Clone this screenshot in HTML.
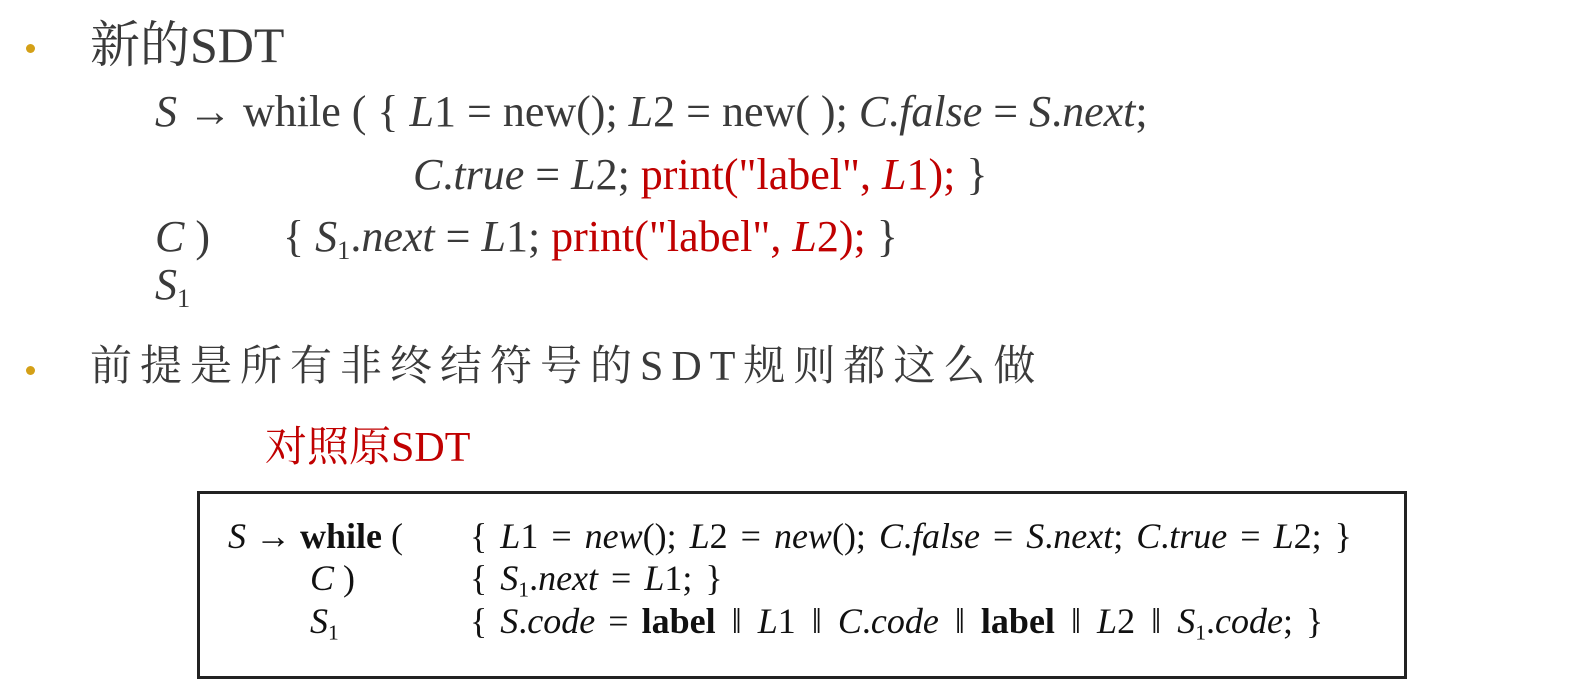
<!DOCTYPE html>
<html><head><meta charset="utf-8"><style>
body{margin:0;width:1577px;height:700px;background:#fff;position:relative;overflow:hidden;font-family:"Liberation Serif","Noto Serif CJK SC",serif;color:#3a3a3a}
.a{position:absolute;white-space:nowrap;line-height:1}
.f{font-size:44px}
i{font-style:italic}
.r{color:#c00000}
.dot{position:absolute;width:9px;height:9px;border-radius:50%;background:#d4a017}
.box{position:absolute;left:197px;top:491px;width:1204px;height:182px;border:3px solid #222}
.b{font-size:36px;color:#111}
.w{word-spacing:4px}
.p{margin:0 3px}
sub{font-size:0.6em;vertical-align:-0.3em}
</style></head><body>
<div class="dot" style="left:26px;top:44px"></div>
<div class="a" style="left:90px;top:20px;font-size:50px">新的SDT</div>
<div class="a f" style="left:155px;top:90px"><i>S</i> <b>&#8594;</b> while ( { <i>L</i>1 = new(); <i>L</i>2 = new( ); <i>C</i>.<i>false</i> = <i>S</i>.<i>next</i>;</div>
<div class="a f" style="left:413px;top:153px"><i>C</i>.<i>true</i> = <i>L</i>2; <span class="r">print("label", <i>L</i>1);</span> }</div>
<div class="a f" style="left:155px;top:215px"><i>C</i> )</div>
<div class="a f" style="left:283px;top:215px">{ <i>S</i><sub>1</sub>.<i>next</i> = <i>L</i>1; <span class="r">print("label", <i>L</i>2);</span> }</div>
<div class="a f" style="left:155px;top:263px"><i>S</i><sub>1</sub></div>
<div class="dot" style="left:26px;top:366px"></div>
<div class="a" style="left:90px;top:346px;font-size:42px;letter-spacing:8px">前提是所有非终结符号的SDT规则都这么做</div>
<div class="a r" style="left:265px;top:427px;font-size:42px">对照原SDT</div>
<div class="box"></div>
<div class="a b" style="left:228px;top:518px"><i>S</i> &#8594; <b>while</b> (</div>
<div class="a b w" style="left:470px;top:518px">{ <i>L</i>1 = <i>new</i>(); <i>L</i>2 = <i>new</i>(); <i>C</i>.<i>false</i> = <i>S</i>.<i>next</i>; <i>C</i>.<i>true</i> = <i>L</i>2; }</div>
<div class="a b" style="left:310px;top:560px"><i>C</i> )</div>
<div class="a b w" style="left:470px;top:560px">{ <i>S</i><sub>1</sub>.<i>next</i> = <i>L</i>1; }</div>
<div class="a b" style="left:310px;top:603px"><i>S</i><sub>1</sub></div>
<div class="a b w" style="left:470px;top:603px">{ <i>S</i>.<i>code</i> = <b>label</b> <span class="p">&#8214;</span> <i>L</i>1 <span class="p">&#8214;</span> <i>C</i>.<i>code</i> <span class="p">&#8214;</span> <b>label</b> <span class="p">&#8214;</span> <i>L</i>2 <span class="p">&#8214;</span> <i>S</i><sub>1</sub>.<i>code</i>; }</div>
</body></html>
